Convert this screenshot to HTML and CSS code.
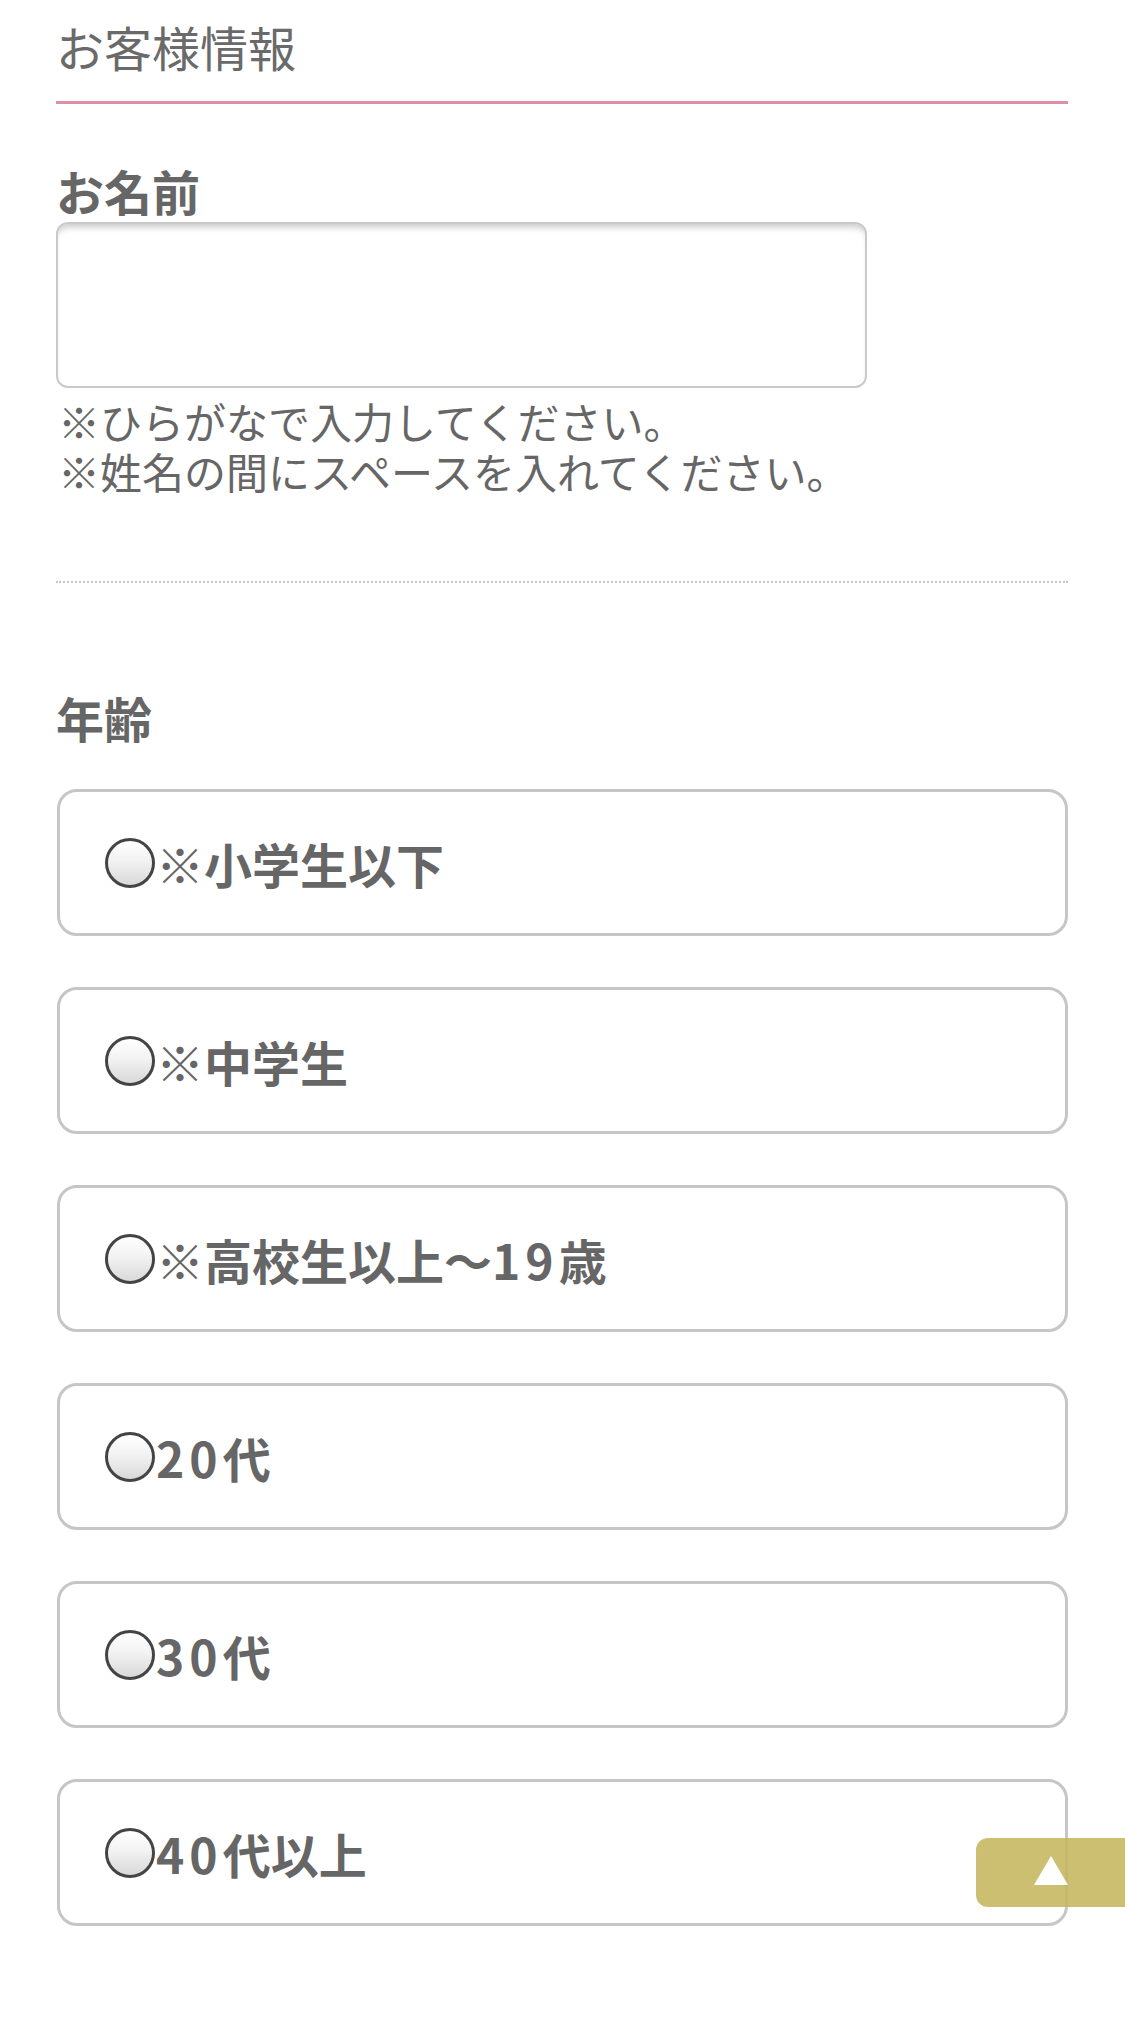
FILE: index.html
```html
<!DOCTYPE html>
<html lang="ja">
<head>
<meta charset="utf-8">
<title>お客様情報</title>
<link rel="stylesheet" href="styles.css">
</head>
<body>
<main class="form">
  <h2 class="section-title">お客様情報</h2>

  <div class="field field-name">
    <label class="field-label">お名前</label>
    <div class="text-input"></div>
    <p class="hint">※ひらがなで入力してください。</p>
    <p class="hint">※姓名の間にスペースを入れてください。</p>
  </div>

  <hr class="divider">

  <div class="field field-age">
    <div class="field-label">年齢</div>
    <div class="options">
      <div class="option"><span class="radio"></span><span class="option-text"><span class="mark">※</span>小学生以下</span></div>
      <div class="option"><span class="radio"></span><span class="option-text"><span class="mark">※</span>中学生</span></div>
      <div class="option"><span class="radio"></span><span class="option-text"><span class="mark">※</span>高校生以上〜<span class="num">19</span>歳</span></div>
      <div class="option"><span class="radio"></span><span class="option-text"><span class="num">20</span>代</span></div>
      <div class="option"><span class="radio"></span><span class="option-text"><span class="num">30</span>代</span></div>
      <div class="option"><span class="radio"></span><span class="option-text"><span class="num">40</span>代以上</span></div>
    </div>
  </div>
</main>

<a class="to-top" href="#"><span class="to-top-arrow"></span></a>
</body>
</html>
```

FILE: styles.css
```css
html, body {
  margin: 0;
  padding: 0;
  background: #ffffff;
}

body {
  font-family: "Noto Sans CJK JP", "Noto Sans", sans-serif;
  color: #666666;
}

.form {
  padding: 0 57px 100px 56px;
}

.section-title {
  margin: 0;
  padding-top: 16px;
  padding-bottom: 25px;
  font-size: 48px;
  line-height: 60px;
  font-weight: 400;
  color: #6a6a6a;
  border-bottom: 3px solid #dd90a3;
}

.field-label {
  display: block;
  font-size: 48px;
  line-height: 50px;
  font-weight: 700;
  color: #666666;
}

.field-name {
  margin-top: 61px;
}

.text-input {
  margin-top: 7px;
  width: 811px;
  height: 166px;
  box-sizing: border-box;
  border: 2px solid #c9c9c9;
  border-radius: 12px;
  box-shadow: inset 0 7px 7px -4px rgba(0, 0, 0, 0.22);
  background: #ffffff;
}

.hint {
  margin: 0 0 0 2px;
  height: 50px;
  font-size: 42px;
  line-height: 50px;
  font-weight: 400;
  color: #666666;
  white-space: nowrap;
}

.text-input + .hint {
  margin-top: 8px;
}

.divider {
  margin: 85px 0 0 0;
  border: 0;
  border-top: 2px dotted #c8c8c8;
  height: 0;
}

.field-age {
  margin-top: 109px;
}

.options {
  margin-top: 47px;
  display: flex;
  flex-direction: column;
  gap: 51px;
}

.option {
  height: 147px;
  box-sizing: border-box;
  border: 3px solid #c6c6c6;
  border-radius: 20px;
  display: flex;
  align-items: center;
  padding-left: 45px;
  margin-left: 1px;
}

.radio {
  width: 50px;
  height: 50px;
  box-sizing: border-box;
  border: 3px solid #444444;
  border-radius: 50%;
  background: linear-gradient(#ffffff 0%, #f2f2f2 45%, #d9d9d9 100%);
  flex: none;
}

.option-text {
  margin-left: 1px;
  font-size: 48px;
  line-height: 50px;
  font-weight: 700;
  color: #666666;
}

.num {
  letter-spacing: 5px;
}

.mark {
  font-weight: 400;
}

.to-top {
  position: fixed;
  right: 0;
  bottom: 121px;
  width: 149px;
  height: 69px;
  border-radius: 12px 0 0 12px;
  background: rgba(198, 182, 93, 0.88);
  display: flex;
  align-items: center;
  justify-content: center;
}

.to-top-arrow {
  width: 0;
  height: 0;
  border-left: 17px solid transparent;
  border-right: 17px solid transparent;
  border-bottom: 29px solid #ffffff;
  margin-top: -5px;
}
```
